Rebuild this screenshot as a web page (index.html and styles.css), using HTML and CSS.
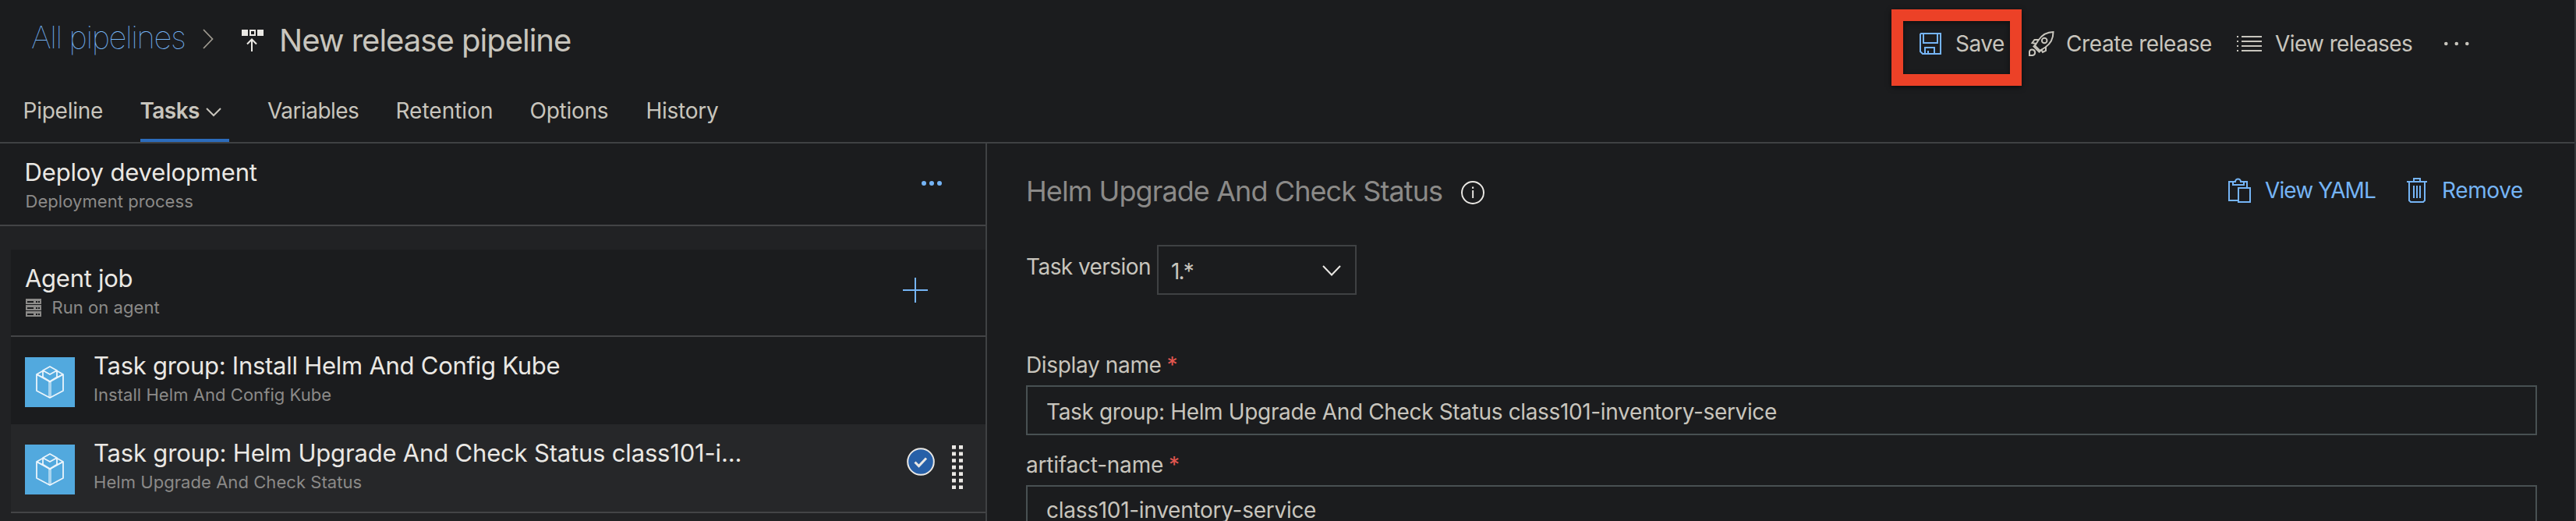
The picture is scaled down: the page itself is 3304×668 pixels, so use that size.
FILE: index.html
```html
<!DOCTYPE html>
<html lang="en">
<head>
<meta charset="utf-8">
<title>New release pipeline</title>
<link rel="stylesheet" href="styles.css">
</head>
<body>
<header class="header">
  <div class="topbar">
    <a class="crumb">All pipelines</a>
    <svg class="crumb-sep" width="16" height="28" viewBox="0 0 16 28" fill="none" stroke="#a19c92" stroke-width="1.7"><path d="M2 2l11.500 12L2 26"/></svg>
    <svg class="title-icon" width="28" height="28" viewBox="0 0 28 28"><path fill="#eae8e4" fill-rule="evenodd" d="M0 0h8v8H0zM20 0h8v8h-8zM10 0h8v8h-8zM12 2v4h4V2z"/><path d="M13 28V12.500M7 18.500l6-6 6 6" fill="none" stroke="#eae8e4" stroke-width="2"/></svg>
    <h1 class="title">New release pipeline</h1>
    <div class="toolbar">
      <div class="highlight">
        <button class="tool save">
          <svg width="28" height="28" viewBox="0 0 28 28" fill="none" stroke="#75b4f5" stroke-width="2"><path d="M2 1h25v26H4L1 24V2zM5 1v12h18V1M7 27v-8h12v8M11 27v-4"/></svg>
          <span>Save</span>
        </button>
      </div>
      <button class="tool create">
        <svg width="33" height="32" viewBox="0 0 33 32" fill="none" stroke="#c8c5bd" stroke-width="2"><path d="M31.500 1C23 1 17 5 12.500 11.500L8 18.500l6.500 6.500 7-4.500C28 16 31.500 10 31.500 1z"/><circle cx="20.200" cy="12" r="3.300"/><path d="M13 11H7.500L4.500 15l5 1M22 20v5l-4 2-2-4M9 17l-2.500 2.500 7 7L16 24M1 31v-5a3.700 3.700 0 1 1 4 5z"/></svg>
        <span>Create release</span>
      </button>
      <button class="tool view">
        <svg width="32" height="20" viewBox="0 0 32 20" fill="#c8c5bd"><path d="M0 0h2v2H0zM0 6h2v2H0zM0 12h2v2H0zM0 18h2v2H0zM6 0h26v2H6zM6 6h26v2H6zM6 12h26v2H6zM6 18h26v2H6z"/></svg>
        <span>View releases</span>
      </button>
      <button class="tool more">
        <svg width="34" height="8" viewBox="0 0 34 8" fill="#c8c5bd"><circle cx="3.300" cy="4" r="2.300"/><circle cx="16.800" cy="4" r="2.300"/><circle cx="30.300" cy="4" r="2.300"/></svg>
      </button>
    </div>
  </div>
  <nav class="tabs">
    <a class="tab t-pipeline">Pipeline</a>
    <a class="tab t-tasks">Tasks<svg width="20" height="12" viewBox="0 0 20 12" fill="none" stroke="#c8c5bd" stroke-width="2"><path d="M1 1l9 9 9-9"/></svg></a>
    <a class="tab t-variables">Variables</a>
    <a class="tab t-retention">Retention</a>
    <a class="tab t-options">Options</a>
    <a class="tab t-history">History</a>
  </nav>
</header>
<main class="main">
  <section class="left">
    <div class="stage">
      <div>
        <div class="name n-stage">Deploy development</div>
        <div class="sub s-tight">Deployment process</div>
      </div>
      <svg class="stage-more" width="28" height="8" viewBox="0 0 28 8" fill="#75b4f5"><circle cx="4" cy="4" r="3"/><circle cx="14" cy="4" r="3"/><circle cx="24" cy="4" r="3"/></svg>
    </div>
    <div class="job-list">
      <div class="job">
        <div>
          <div class="name n-job">Agent job</div>
          <div class="sub sub-icon">
            <svg width="20" height="23" viewBox="0 0 20 23"><path fill="#8b8a88" fill-rule="evenodd" d="M0 0h20v7H0zM2 3v2h8V3zM13 3v2h2V3zM16 3v2h2V3zM0 8h20v7H0zM2 11v2h8v-2zM13 11v2h2v-2zM16 11v2h2v-2zM0 16h20v7H0zM2 19v2h8v-2zM13 19v2h2v-2zM16 19v2h2v-2z"/></svg>
            <span>Run on agent</span>
          </div>
        </div>
        <svg class="add" width="32" height="32" viewBox="0 0 32 32" fill="#75b4f5"><path d="M15 0h2v32h-2zM0 15h32v2H0z"/></svg>
      </div>
      <div class="task">
        <svg class="tile" width="64" height="64" viewBox="0 0 64 64"><path fill="#52a9de" d="M0 0h64v64H0z"/><g fill="none" stroke="#fff" stroke-width="1.800" stroke-linejoin="round" opacity=".88"><path d="M15 22v21l17 9 17-9V22l-8-4.500M23 17.500L15 22l17 9.500L49 22"/><path d="M32 12l-9 5v8.500l9 5.500 9-5.500V17zM23 17l9 5 9-5M15 22l8 4M49 22l-8 4"/></g><path d="M32 31v21" stroke="#fff" stroke-width="4" opacity=".5"/></svg>
        <div>
          <div class="name n-install">Task group: Install Helm And Config Kube</div>
          <div class="sub">Install Helm And Config Kube</div>
        </div>
      </div>
      <div class="task selected">
        <svg class="tile" width="64" height="64" viewBox="0 0 64 64"><path fill="#52a9de" d="M0 0h64v64H0z"/><g fill="none" stroke="#fff" stroke-width="1.800" stroke-linejoin="round" opacity=".88"><path d="M15 22v21l17 9 17-9V22l-8-4.500M23 17.500L15 22l17 9.500L49 22"/><path d="M32 12l-9 5v8.500l9 5.500 9-5.500V17zM23 17l9 5 9-5M15 22l8 4M49 22l-8 4"/></g><path d="M32 31v21" stroke="#fff" stroke-width="4" opacity=".5"/></svg>
        <div>
          <div class="name n-upgrade">Task group: Helm Upgrade And Check Status class101-i...</div>
          <div class="sub">Helm Upgrade And Check Status</div>
        </div>
        <svg class="check" width="36" height="36" viewBox="0 0 36 36"><circle cx="18" cy="18" r="16.800" fill="#2760a8" stroke="#eae8e4" stroke-width="2"/><path d="M10.500 18.500l5 5 9.500-10" fill="none" stroke="#eae8e4" stroke-width="3"/></svg>
        <svg class="grip" width="14" height="57" viewBox="0 0 14 57" fill="none" stroke="#eae8e4" stroke-width="5" stroke-dasharray="4.700 3.870"><path d="M2.500 0v57M11.500 0v57"/></svg>
      </div>
    </div>
  </section>
  <section class="right">
    <div class="panel-head">
      <h2 class="panel-title">Helm Upgrade And Check Status</h2>
      <svg class="info" width="32" height="32" viewBox="0 0 32 32"><circle cx="16" cy="16" r="14" fill="none" stroke="#eae8e4" stroke-width="2"/><path fill="#eae8e4" d="M15.200 13h1.900v10h-1.900zM15 8.500h2.200v2.200H15z"/></svg>
      <div class="actions">
        <a class="action yaml"><svg width="29" height="32" viewBox="0 0 29 32" fill="none" stroke="#75b4f5" stroke-width="2"><path d="M13 29H1V5h5M18 5h6v7M13 13h15v18H13zM6 5v4h14V5h-4a3.500 3.500 0 0 0-7 0z"/></svg><span>View YAML</span></a>
        <a class="action remove"><svg width="26" height="32" viewBox="0 0 26 32" fill="none" stroke="#75b4f5" stroke-width="2"><path d="M0 5h26M9 5V1h8v4M3 5v24l2 2h16l2-2V5M9 10v16M13 10v16M17 10v16"/></svg><span>Remove</span></a>
      </div>
    </div>
    <div class="version">
      <label class="label l-version">Task version</label>
      <div class="select"><span>1.*</span><svg width="24" height="14" viewBox="0 0 24 14" fill="none" stroke="#eae8e4" stroke-width="2"><path d="M1 1l11 11.500L23 1"/></svg></div>
    </div>
    <div class="field">
      <label class="label l-display">Display name<span class="req">*</span></label>
      <div class="input i-display">Task group: Helm Upgrade And Check Status class101-inventory-service</div>
    </div>
    <div class="field next">
      <label class="label l-artifact">artifact-name<span class="req">*</span></label>
      <div class="input i-artifact">class101-inventory-service</div>
    </div>
  </section>
</main>
</body>
</html>
```

FILE: styles.css
```css
* { box-sizing: border-box; }
html { background: #1b1c1e; }
body {
  margin: 0;
  height: 668px;
  overflow: hidden;
  display: flex;
  flex-direction: column;
  border-right: 2px solid #343638;
  background: #1b1c1e;
  color: #c8c5bd;
  font: 400 28px/40px Inter, "Liberation Sans", sans-serif;
  white-space: nowrap;
}
svg { display: block; flex: none; }
button { margin: 0; padding: 0; border: 0; background: none; color: inherit; font: inherit; }

/* Header */
.header { flex: none; height: 184px; border-bottom: 2px solid #3f4143; }
.topbar { display: flex; align-items: flex-start; height: 122px; padding-left: 40px; }
.crumb { width: 219px; margin-top: 24px; color: #75b4f5; font-size: 40px; font-weight: 100; line-height: 48px; letter-spacing: -1.39px; }
.crumb-sep { margin-top: 36px; }
.title-icon { margin: 38px 20px 0 35px; }
.title { margin: 28px 0 0; font-size: 40px; font-weight: 400; line-height: 48px; letter-spacing: -1px; }
.toolbar { display: flex; align-items: flex-start; margin: 12px 134px 0 auto; }
.highlight { width: 167px; height: 98px; margin-right: 9px; padding-left: 21px; border: 15px solid #ec4127; box-shadow: 0 2px 6px rgba(0, 0, 0, .6), inset 0 2px 6px rgba(0, 0, 0, .5); }
.tool { display: flex; align-items: center; height: 40px; margin-top: 24px; }
.save { gap: 18px; margin-top: 9px; letter-spacing: -.49px; }
.create { width: 267px; gap: 15px; letter-spacing: -.4px; }
.view { width: 265px; gap: 17px; letter-spacing: -.61px; }

.tabs { display: grid; grid-template-columns: 150px 163.500px 164.500px 172px 149px auto; height: 60px; padding-left: 29.500px; }
.tab { letter-spacing: -.25px; }
.t-tasks { display: flex; justify-content: space-between; width: 114px; height: 60px; padding-right: 10px; border-bottom: 4px solid #2c6cbc; font-weight: 600; letter-spacing: -.58px; }
.t-tasks svg { margin-top: 16px; }
.t-variables { letter-spacing: -.54px; }
.t-retention { letter-spacing: 0; }

/* Task tree */
.main { display: flex; flex: 1; min-height: 0; }
.left { display: flex; flex-direction: column; width: 1266px; border-right: 2px solid #3f4143; background: #212224; }
.stage { display: flex; justify-content: space-between; flex: none; height: 106px; padding: 17px 55px 0 31.500px; border-bottom: 2px solid #434446; background: #1b1c1e; }
.stage-more { margin-top: 30px; }
.name { color: #eae8e4; font-size: 31px; line-height: 40px; }
.sub { margin-top: 1px; color: #8b8a88; font-size: 22px; line-height: 32px; letter-spacing: .055px; }
.n-stage { letter-spacing: -.16px; }
.n-job { margin-left: -1px; letter-spacing: -.27px; }
.n-install { letter-spacing: -.26px; }
.n-upgrade { letter-spacing: -.18px; }
.s-tight { padding-left: 1px; }
.job-list { margin: 30px 0 0 14px; border-bottom: 2px solid #434446; background: #1b1c1e; }
.job { display: flex; justify-content: space-between; height: 112px; padding: 17px 74px 0 19px; border-bottom: 2px solid #434446; }
.sub-icon { display: flex; align-items: center; gap: 13.500px; }
.add { margin-top: 19px; }
.task { display: flex; height: 112px; padding: 17px 29px 0 18px; }
.tile { margin: 9px 24px 0 0; }
.selected { background: #262729; }
.check { margin: 13px 22px 0 auto; }
.grip { margin-top: 10px; }

/* Task details */
.right { flex: 1; padding: 37px 48px 0 50px; }
.panel-head { display: flex; height: 48px; }
.panel-title { margin: 0; color: #8b8a88; font-size: 36px; font-weight: 400; line-height: 48px; letter-spacing: -.91px; }
.info { margin: 10px 0 0 23px; }
.actions { display: flex; margin: 3px 0 0 auto; }
.action { display: flex; align-items: center; height: 40px; color: #75b4f5; }
.yaml { width: 229px; gap: 18px; letter-spacing: -.91px; }
.remove { width: 167px; gap: 19px; letter-spacing: -.38px; }
.version { display: flex; height: 64px; margin-top: 45px; }
.label { display: block; }
.l-version { width: 168px; margin-top: 8px; letter-spacing: -.56px; }
.select { display: flex; justify-content: space-between; width: 256px; height: 64px; padding: 12px 18px 0 16px; border: 2px solid #3f4143; }
.select span { letter-spacing: -1.8px; }
.select svg { margin-top: 12px; }
.field { margin-top: 70px; }
.next { margin-top: 18px; }
.l-display { letter-spacing: -.35px; }
.l-artifact { letter-spacing: -.22px; }
.req { margin-left: 7px; color: #e0564f; }
.input { height: 64px; margin-top: 6px; padding: 12px 24px 0; border: 2px solid #485052; }
.i-display { letter-spacing: -.35px; }
.i-artifact { padding-top: 10px; letter-spacing: -.28px; }
```
